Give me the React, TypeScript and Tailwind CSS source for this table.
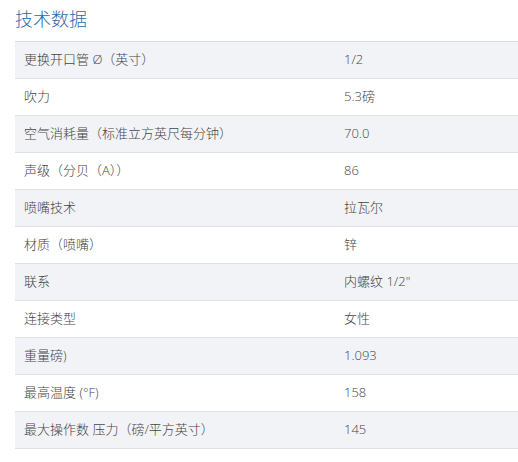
const rows: [string, string][] = [
  ["更换开口管 Ø（英寸）", "1/2"],
  ["吹力", "5.3磅"],
  ["空气消耗量（标准立方英尺每分钟）", "70.0"],
  ["声级（分贝（A））", "86"],
  ["喷嘴技术", "拉瓦尔"],
  ["材质（喷嘴）", "锌"],
  ["联系", "内螺纹 1/2\""],
  ["连接类型", "女性"],
  ["重量磅)", "1.093"],
  ["最高温度 (°F)", "158"],
  ["最大操作数 压力（磅/平方英寸）", "145"],
]

export default function App() {
  return (
    <div
      className="w-[518px] h-[462px] bg-white pl-[15px]"
      style={{ fontFamily: '"Open Sans", "Noto Sans CJK SC", sans-serif' }}
    >
      <h2 className="h-[41px] pt-[5px] text-[18px] leading-[28px] font-light text-[#2b6ba6]">技术数据</h2>
      <div className="border-t border-[#dcdcdc]">
        {rows.map(([label, value], i) => (
          <div
            key={label}
            className={`flex h-[37px] items-center border-b border-[#e2e2e2] text-[13px] font-light text-[#444] ${
              i % 2 === 0 ? "bg-[#f2f3f7]" : "bg-white"
            }`}
          >
            <span className="w-[329px] pl-[9px]">{label}</span>
            <span>{value}</span>
          </div>
        ))}
      </div>
    </div>
  )
}
